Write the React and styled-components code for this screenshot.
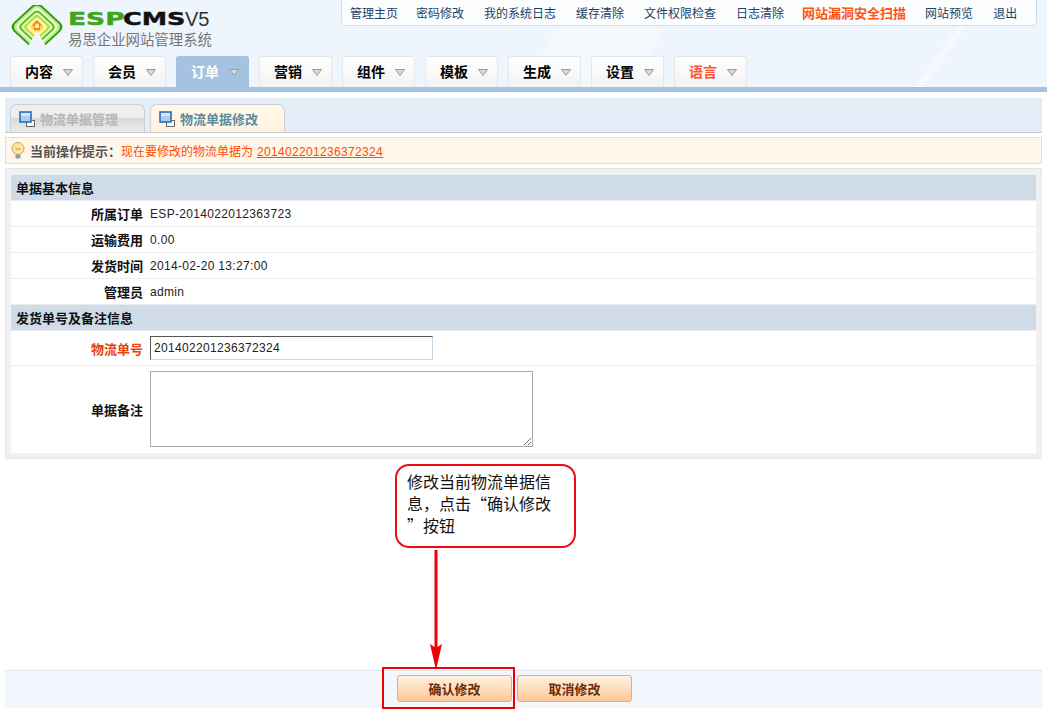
import React from "react";
import styled, { createGlobalStyle } from "styled-components";

const CN = `"Liberation Sans", "Noto Sans CJK SC", sans-serif`;

const GlobalStyle = createGlobalStyle`
  html, body { margin: 0; padding: 0; background: #fff; }
  body { font-family: ${CN}; font-size: 12px; color: #111; }
`;

const Page = styled.div`
  position: relative;
  width: 1047px;
  height: 712px;
  overflow: hidden;
  display: flex;
  flex-direction: column;
  background: #fff;
`;

const Header = styled.header`
  height: 87px;
  flex: none;
  box-sizing: border-box;
  display: flex;
  flex-direction: column;
  background:
    linear-gradient(118deg, transparent 0 52%, rgba(255,255,255,.3) 52.2% 62%, transparent 62.3%),
    linear-gradient(125deg, transparent 0 88%, rgba(255,255,255,.45) 88.2% 88.8%, transparent 89%),
    #eef5fd;
`;

const HeaderTop = styled.div`
  height: 56px;
  display: flex;
  justify-content: space-between;
  align-items: flex-start;
  padding: 0 10px 0 11px;
`;

const Brand = styled.div`
  display: flex;
  align-items: flex-start;
  padding-top: 5px;
  gap: 5px;
`;

const BrandText = styled.div`
  display: flex;
  flex-direction: column;
  padding-top: 5px;
`;

const BrandName = styled.div`
  height: 18px;
  line-height: 18px;
  white-space: nowrap;
  display: flex;
  align-items: center;
`;

const BrandWide = styled.span`
  display: inline-block;
  width: ${p => p.$w}px;
  font-family: "DejaVu Sans", sans-serif;
  font-weight: 700;
  font-size: 17px;
  color: ${p => p.$color};
  -webkit-text-stroke: .4px ${p => p.$color};
  transform: scaleX(${p => p.$sx});
  transform-origin: left center;
`;

const BrandVersion = styled.span`
  font-size: 20px;
  color: #333;
`;

const BrandSub = styled.div`
  font-size: 14.4px;
  line-height: 16px;
  margin-top: 4px;
  color: #777;
  white-space: nowrap;
`;

const TopLinks = styled.nav`
  width: 696px;
  height: 26px;
  box-sizing: border-box;
  display: flex;
  align-items: center;
  padding-left: 8px;
  background: #fbfdff;
  border: 1px solid #cfdeec;
  border-top: 0;
  border-radius: 0 0 5px 5px;
`;

const TopLink = styled.a`
  font-size: ${p => (p.$alert ? 13 : 12)}px;
  color: ${p => (p.$alert ? "#ff5511" : "#1d3f63")};
  font-weight: ${p => (p.$alert ? 700 : 400)};
  margin-right: ${p => p.$gap}px;
  white-space: nowrap;
`;

const MainNav = styled.nav`
  display: flex;
  gap: 10px;
  height: 31px;
  padding-left: 10px;
`;

const NavTab = styled.a`
  width: 73px;
  box-sizing: border-box;
  display: flex;
  align-items: center;
  padding: 0 9px 0 14px;
  justify-content: space-between;
  font-size: 14px;
  font-weight: 700;
  border: 1px solid ${p => (p.$active ? "#a5c3e0" : "#e4e8ec")};
  border-bottom: 0;
  border-radius: 3px 3px 0 0;
  background: ${p => (p.$active ? "#a5c3e0" : "linear-gradient(#fff, #f2f2f2)")};
  color: ${p => (p.$active ? "#fff" : p.$lang ? "#ff5533" : "#000")};
`;

const NavLabel = styled.span`
  margin-bottom: 3px;
`;

const Caret = styled.svg`
  width: 10px;
  height: 7px;
  flex: none;
`;

const BlueBar = styled.div`
  height: 5px;
  flex: none;
  background: #a5c3e0;
`;

const Main = styled.main`
  flex: 1;
  display: flex;
  flex-direction: column;
  padding: 6px 5px 4px;
  min-height: 0;
`;

const TabStrip = styled.div`
  height: 35px;
  box-sizing: border-box;
  display: flex;
  align-items: flex-end;
  gap: 5px;
  padding-left: 5px;
  background: #e3edf8;
  border-bottom: 1px solid #c8c8c8;
`;

const PageTab = styled.a`
  width: 135px;
  height: 28px;
  box-sizing: border-box;
  display: flex;
  align-items: center;
  gap: 5px;
  padding: 0 0 0 8px;
  font-size: 13px;
  font-weight: 700;
  border: 1px solid #cfcfcf;
  border-bottom: 0;
  border-radius: 7px 7px 0 0;
  color: ${p => (p.$active ? "#5b8b9e" : "#b5b5b5")};
  background: ${p => (p.$active ? "linear-gradient(#fff8ea, #fff3df)" : "linear-gradient(#efefef 45%, #d9d9d9 50%, #ebebeb)")};
`;

const Tip = styled.div`
  height: 27px;
  margin-top: 4px;
  box-sizing: border-box;
  display: flex;
  align-items: center;
  gap: 5px;
  padding-left: 5px;
  background: #fff7ea;
  border: 1px solid #fbd9a9;
  font-size: 12px;
`;

const TipLabel = styled.strong`
  color: #555;
  font-size: 13px;
`;

const TipText = styled.span`
  color: #ff4c00;
  margin-left: -5px;
`;

const TipLink = styled.a`
  color: #ff4c00;
  text-decoration: underline;
  letter-spacing: .33px;
  margin-left: 4px;
`;

const Panel = styled.section`
  margin-top: 4px;
  box-sizing: border-box;
  height: 291px;
  padding: 6px 5px 5px;
  background: #f1f1f1;
  border: 1px solid #e8e8e8;
  border-top: 1px solid #e4e4e4;
`;

const PanelBody = styled.div`
  background: #fff;
  height: 100%;
`;

const SectionTitle = styled.div`
  height: 26px;
  box-sizing: border-box;
  padding: 0 0 1px 5px;
  display: flex;
  align-items: center;
  background: #cfdbe7;
  border-bottom: 1px solid #e9edf1;
  font-weight: 700;
  font-size: 13px;
  color: #111;
`;

const Row = styled.div`
  display: grid;
  grid-template-columns: 132px 1fr;
  column-gap: 7px;
  align-items: center;
  height: ${p => p.$h}px;
  box-sizing: border-box;
  border-bottom: ${p => (p.$last ? "0" : "1px solid #ececec")};
`;

const Label = styled.label`
  text-align: right;
  font-weight: 700;
  font-size: 13px;
  color: ${p => (p.$required ? "#e8410a" : "#111")};
`;

const Value = styled.span`
  font-size: 12px;
  letter-spacing: .33px;
  color: #222;
`;

const TextInput = styled.input`
  width: 283px;
  height: 24px;
  box-sizing: border-box;
  padding: 0 3px;
  font: 12px "Liberation Sans", sans-serif;
  letter-spacing: .33px;
  color: #222;
  border: 1px solid #c5d5e5;
  border-top-color: #555;
  border-left-color: #555;
  outline: none;
`;

const TextArea = styled.textarea`
  display: block;
  width: 383px;
  height: 76px;
  box-sizing: border-box;
  border: 1px solid #aaa;
  outline: none;
  padding: 2px;
`;

const Spacer = styled.div`
  flex: 1;
`;

const Footer = styled.footer`
  height: 38px;
  flex: none;
  box-sizing: border-box;
  display: flex;
  align-items: flex-start;
  justify-content: center;
  gap: 5px;
  padding: 4px 18px 0 0;
  background: #f1f7fd;
  border-top: 1px solid #dbe6f0;
`;

const ActionButton = styled.button`
  width: 115px;
  height: 27px;
  font: 700 13px ${CN};
  color: #6b2a0a;
  border: 1px solid #f2a57f;
  border-radius: 3px;
  background: linear-gradient(#fff2e2, #fdc796);
  padding: 0;
`;

const Callout = styled.div`
  position: absolute;
  left: 395px;
  top: 464px;
  width: 181px;
  height: 84px;
  box-sizing: border-box;
  padding: 4px 10px;
  border: 2px solid #f00a14;
  border-radius: 14px;
  background: #fff;
  font-family: "Noto Sans CJK SC", sans-serif;
  font-size: 16px;
  line-height: 22px;
  white-space: nowrap;
  color: #111;
`;

const ArrowMark = styled.svg`
  position: absolute;
  left: 426px;
  top: 550px;
  width: 20px;
  height: 122px;
`;

const Highlight = styled.div`
  position: absolute;
  left: 382px;
  top: 667px;
  width: 133px;
  height: 42px;
  box-sizing: border-box;
  border: 2px solid #f00000;
`;

const LogoLayer = ({ h, r, fill }) => (
  <rect x={-h} y={-h} width={h * 2} height={h * 2} rx={r} fill={fill} />
);

const Logo = () => (
  <svg width="52" height="41" viewBox="0 0 52 41" style={{ display: "block", flex: "none" }}>
    <g transform="translate(26 22) scale(1 .92) rotate(45)">
      <LogoLayer h={20} r={7} fill="#2f9e12" />
      <LogoLayer h={18} r={6} fill="#bfeb8c" />
      <LogoLayer h={16} r={5} fill="#f2fbd8" />
      <LogoLayer h={14} r={5} fill="#5cc025" />
      <LogoLayer h={12} r={4} fill="#e9f8b0" />
      <LogoLayer h={10} r={3} fill="#a8de4c" />
      <LogoLayer h={8} r={3} fill="#fdf6a0" />
      <LogoLayer h={5} r={2} fill="#fbd24e" />
    </g>
    <path d="M26 26L17 41h18z" fill="#eef5fd" />
    <path d="M26 15l5 5-2 1v4h-6v-4l-2-1z" fill="#f08a1c" />
    <path d="M26 18l2 2v3h-4v-3z" fill="#fff3b0" />
  </svg>
);

const CaretIcon = () => (
  <Caret viewBox="0 0 10 7">
    <path d="M.5.5h9L5 6.5z" fill="#d8d8d8" stroke="#9a9a9a" strokeWidth="1" />
  </Caret>
);

const ScreenIcon = () => (
  <svg width="16" height="16" viewBox="0 0 16 16" style={{ flex: "none" }}>
    <rect x="7.5" y="9.5" width="8" height="6" fill="#fff" stroke="#666" />
    <rect x="1" y="1" width="11" height="10" fill="#a9cdf0" stroke="#2f6fb5" strokeWidth="1.6" />
    <rect x="2" y="2" width="9" height="3" fill="#d6e8fa" />
  </svg>
);

const BulbIcon = () => (
  <svg width="14" height="18" viewBox="0 0 14 18" style={{ flex: "none" }}>
    <circle cx="7" cy="6.5" r="6" fill="#ffe49a" stroke="#c2a868" />
    <path d="M4.5 6l1.5 2 1-2 1 2 1.5-2" fill="none" stroke="#d99a2b" strokeWidth=".8" />
    <rect x="4.5" y="12.5" width="5" height="4" rx="1" fill="#8f9ca6" />
  </svg>
);

const topLinks = [
  { text: "管理主页", gap: 18 },
  { text: "密码修改", gap: 20 },
  { text: "我的系统日志", gap: 20 },
  { text: "缓存清除", gap: 20 },
  { text: "文件权限检查", gap: 20 },
  { text: "日志清除", gap: 18 },
  { text: "网站漏洞安全扫描", gap: 19, alert: true },
  { text: "网站预览", gap: 20 },
  { text: "退出", gap: 0 },
];

const navItems = ["内容", "会员", "订单", "营销", "组件", "模板", "生成", "设置", "语言"];

const App = () => (
  <Page>
    <GlobalStyle />
    <Header>
      <HeaderTop>
        <Brand>
          <Logo />
          <BrandText>
            <BrandName>
              <BrandWide $w={55} $sx={1.56} $color="#3fa51a">ESP</BrandWide>
              <BrandWide $w={62} $sx={1.5} $color="#111">CMS</BrandWide>
              <BrandVersion>V5</BrandVersion>
            </BrandName>
            <BrandSub>易思企业网站管理系统</BrandSub>
          </BrandText>
        </Brand>
        <TopLinks>
          {topLinks.map(link => (
            <TopLink key={link.text} $gap={link.gap} $alert={link.alert}>{link.text}</TopLink>
          ))}
        </TopLinks>
      </HeaderTop>
      <MainNav>
        {navItems.map(item => (
          <NavTab key={item} $active={item === "订单"} $lang={item === "语言"}>
            <NavLabel>{item}</NavLabel>
            <CaretIcon />
          </NavTab>
        ))}
      </MainNav>
    </Header>
    <BlueBar />
    <Main>
      <TabStrip>
        <PageTab><ScreenIcon />物流单据管理</PageTab>
        <PageTab $active><ScreenIcon />物流单据修改</PageTab>
      </TabStrip>
      <Tip>
        <BulbIcon />
        <TipLabel>当前操作提示：</TipLabel>
        <TipText>
          现在要修改的物流单据为
          <TipLink>201402201236372324</TipLink>
        </TipText>
      </Tip>
      <Panel>
        <PanelBody>
          <SectionTitle>单据基本信息</SectionTitle>
          <Row $h={26}><Label>所属订单</Label><Value>ESP-2014022012363723</Value></Row>
          <Row $h={26}><Label>运输费用</Label><Value>0.00</Value></Row>
          <Row $h={26}><Label>发货时间</Label><Value>2014-02-20 13:27:00</Value></Row>
          <Row $h={26}><Label>管理员</Label><Value>admin</Value></Row>
          <SectionTitle>发货单号及备注信息</SectionTitle>
          <Row $h={35}><Label $required>物流单号</Label><TextInput defaultValue="201402201236372324" /></Row>
          <Row $h={86} $last><Label>单据备注</Label><TextArea /></Row>
        </PanelBody>
      </Panel>
      <Spacer />
      <Footer>
        <ActionButton>确认修改</ActionButton>
        <ActionButton>取消修改</ActionButton>
      </Footer>
    </Main>
    <Callout>
      修改当前物流单据信<br />
      息，点击“确认修改<br />
      ”按钮
    </Callout>
    <ArrowMark viewBox="0 0 20 122">
      <path d="M10 0v104" stroke="#f00000" strokeWidth="3" fill="none" />
      <path d="M4 94l6 4 6-4-6 26z" fill="#f00000" />
    </ArrowMark>
    <Highlight />
  </Page>
);

export default App;
